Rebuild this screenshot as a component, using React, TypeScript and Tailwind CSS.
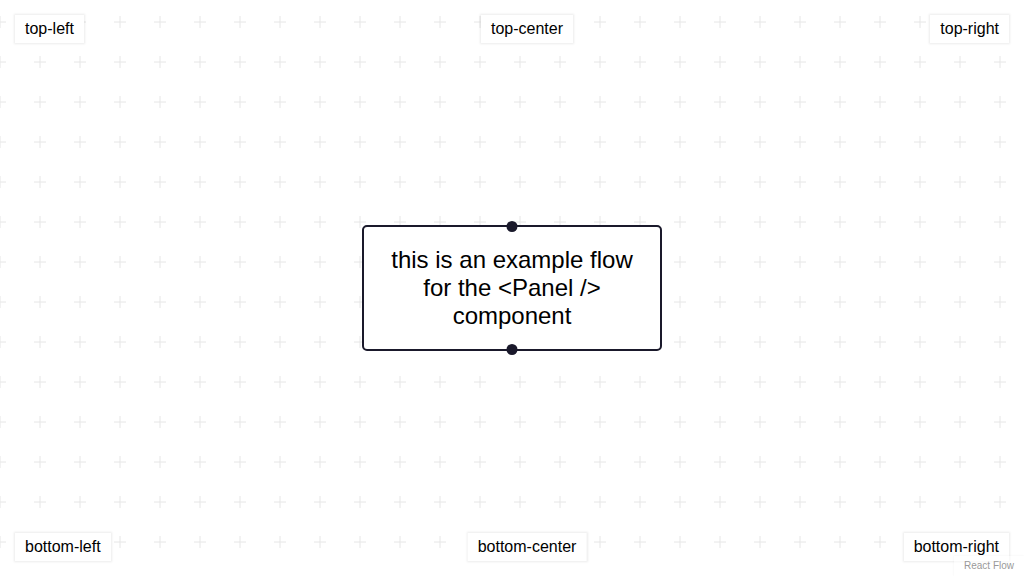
import React from 'react';

const font = { fontFamily: '"Liberation Sans", Arial, sans-serif' };

function Panel({ label, className }: { label: string; className: string }) {
  return (
    <div
      className={`absolute bg-white px-[10px] py-[5px] text-[16px] leading-[18px] text-black shadow-[0_0_2px_1px_rgba(0,0,0,0.08)] ${className}`}
    >
      {label}
    </div>
  );
}

function CrossBackground() {
  return (
    <svg className="absolute inset-0 h-full w-full" aria-hidden>
      <defs>
        <pattern id="cross" x="-20" y="2" width="40" height="40" patternUnits="userSpaceOnUse">
          <path d="M14 20h12M20 14v12" stroke="#e6e6e6" strokeWidth="1" />
        </pattern>
      </defs>
      <rect width="100%" height="100%" fill="url(#cross)" />
    </svg>
  );
}

export default function App() {
  return (
    <div className="relative h-[576px] w-[1024px] overflow-hidden bg-white" style={font}>
      <CrossBackground />

      {/* node */}
      <div className="absolute left-[362px] top-[225px] w-[300px] rounded-[5px] border-2 border-[#1a192b] bg-white px-[20px] py-[19px] text-center text-[24px] leading-[28px] text-black">
        this is an example flow for the &lt;Panel /&gt; component
        <span className="absolute left-1/2 top-[-6px] h-[11px] w-[11px] -translate-x-1/2 rounded-full bg-[#1a192b]" />
        <span className="absolute bottom-[-6px] left-1/2 h-[11px] w-[11px] -translate-x-1/2 rounded-full bg-[#1a192b]" />
      </div>

      <Panel label="top-left" className="left-[15px] top-[15px]" />
      <Panel label="top-center" className="left-[calc(50%+15px)] top-[15px] -translate-x-1/2" />
      <Panel label="top-right" className="right-[15px] top-[15px]" />
      <Panel label="bottom-left" className="bottom-[15px] left-[15px]" />
      <Panel label="bottom-center" className="bottom-[15px] left-[calc(50%+15px)] -translate-x-1/2" />
      <Panel label="bottom-right" className="bottom-[15px] right-[15px]" />

      <div className="absolute bottom-0 right-0 bg-white/50 px-[10px] py-[3px] text-[10px] leading-[14px] text-[#999] shadow-[0_0_2px_0_rgba(0,0,0,0.06)]">
        React Flow
      </div>
    </div>
  );
}
